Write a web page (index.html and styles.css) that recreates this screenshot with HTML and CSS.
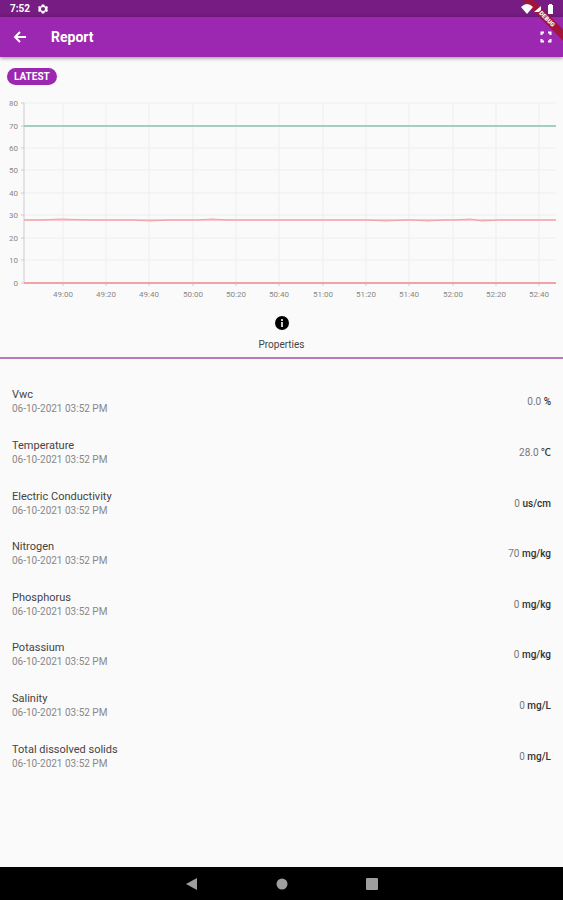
FILE: index.html
```
<!DOCTYPE html>
<html lang="en">
<head>
<meta charset="utf-8">
<meta name="viewport" content="width=device-width, initial-scale=1">
<title>Report</title>
<link rel="stylesheet" href="styles.css">
</head>
<body>
<div class="status-bar">
  <span class="clock">7:52</span>
  <svg class="gear" viewBox="0 0 24 24" aria-hidden="true"><path fill="#fff" fill-rule="evenodd" d="M9 1h6l1 4 2 1 4-1 2 5-3 2 3 2-2 5-4-1-2 1-1 4H9l-1-4-2-1-4 1-2-5 3-2-3-2 2-5 4 1 2-1zM12 7a5 5 0 1 0 0 10 5 5 0 0 0 0-10z"/></svg>
  <svg class="signals" viewBox="0 0 34 12" aria-hidden="true"><path fill="#fff" d="M0 4Q6-2 12 4L6 11zM20 3v4l-2 2h-5zM27 2h1V1h3v1h1v9h-5z"/></svg>
</div>
<header class="app-bar">
  <button class="icon-button" aria-label="Back"><svg width="14" height="14" viewBox="0 0 14 14"><path d="M13 7H2M7 2L2 7l5 5" fill="none" stroke="#fff" stroke-width="2"/></svg></button>
  <h1>Report</h1>
  <button class="icon-button" aria-label="Full screen"><svg width="12" height="12" viewBox="0 0 12 12"><path d="M1.5 4V1.500h2.500M8 1.500h2.500v2.500M10.500 8v2.500H8M4 10.500H1.500V8" fill="none" stroke="#fff" stroke-width="2"/></svg></button>
</header>
<div class="corner"><span class="ribbon">DEBUG</span></div>
<main>
  <button class="chip">LATEST</button>
  <svg class="chart" viewBox="0 0 563 216" role="img" aria-label="Sensor readings over time">
    <path class="grid" d="M24 13H556M24 58H556M24 80H556M24 103H556M24 125H556M24 148H556M24 170H556M63 13V193M106 13V193M149 13V193M193 13V193M236 13V193M279 13V193M323 13V193M366 13V193M409 13V193M453 13V193M496 13V193M539 13V193"/>
    <path class="axis" d="M24 13V193M21 13H24M21 36H24M21 58H24M21 80H24M21 103H24M21 125H24M21 148H24M21 170H24M21 193H24M63 193V196M106 193V196M149 193V196M193 193V196M236 193V196M279 193V196M323 193V196M366 193V196M409 193V196M453 193V196M496 193V196M539 193V196"/>
    <path class="series green" d="M24 36H556"/>
    <path class="series red-soft" d="M24 130H556"/>
    <path class="series red-thin" d="M24 130H42L60 129L90 130H132L150 131L168 130H198L212 129L228 130H366L386 131L406 130H412L428 131L444 130H454L470 129L482 131L500 130H556"/>
    <path class="series red" d="M24 193H556"/>
    <g class="y-labels"><text x="18" y="16">80</text><text x="18" y="39">70</text><text x="18" y="61">60</text><text x="18" y="83">50</text><text x="18" y="106">40</text><text x="18" y="128">30</text><text x="18" y="151">20</text><text x="18" y="173">10</text><text x="18" y="196">0</text></g>
    <g class="x-labels"><text x="63" y="207">49:00</text><text x="106" y="207">49:20</text><text x="149" y="207">49:40</text><text x="193" y="207">50:00</text><text x="236" y="207">50:20</text><text x="279" y="207">50:40</text><text x="323" y="207">51:00</text><text x="366" y="207">51:20</text><text x="409" y="207">51:40</text><text x="453" y="207">52:00</text><text x="496" y="207">52:20</text><text x="539" y="207">52:40</text></g>
  </svg>
  <button class="tab">
    <svg width="14" height="14" viewBox="0 0 14 14" aria-hidden="true"><circle cx="7" cy="7" r="7" fill="#000"/><path d="M6 3h2v2H6zM6 6h2v5H6z" fill="#ccc"/></svg>
    <span>Properties</span>
  </button>
  <ul class="readings">
    <li><div><h2>Vwc</h2><time>06-10-2021 03:52 PM</time></div><p>0.0 <b>%</b></p></li>
    <li><div><h2>Temperature</h2><time>06-10-2021 03:52 PM</time></div><p>28.0 <b>℃</b></p></li>
    <li><div><h2>Electric Conductivity</h2><time>06-10-2021 03:52 PM</time></div><p>0 <b>us/cm</b></p></li>
    <li><div><h2>Nitrogen</h2><time>06-10-2021 03:52 PM</time></div><p>70 <b>mg/kg</b></p></li>
    <li><div><h2>Phosphorus</h2><time>06-10-2021 03:52 PM</time></div><p>0 <b>mg/kg</b></p></li>
    <li><div><h2>Potassium</h2><time>06-10-2021 03:52 PM</time></div><p>0 <b>mg/kg</b></p></li>
    <li><div><h2>Salinity</h2><time>06-10-2021 03:52 PM</time></div><p>0 <b>mg/L</b></p></li>
    <li><div><h2>Total dissolved solids</h2><time>06-10-2021 03:52 PM</time></div><p>0 <b>mg/L</b></p></li>
  </ul>
</main>
<nav class="nav-bar" aria-label="System">
  <button aria-label="Back"><svg width="12" height="12" viewBox="0 0 12 12"><path d="M0 6L11 0v12z"/></svg></button>
  <button aria-label="Home"><svg width="12" height="12" viewBox="0 0 12 12"><circle cx="6" cy="6" r="5.5"/></svg></button>
  <button aria-label="Recent apps"><svg width="12" height="12" viewBox="0 0 12 12"><rect width="12" height="12" rx="1"/></svg></button>
</nav>
</body>
</html>
```
FILE: styles.css
```
* { box-sizing: border-box; }
body {
  margin: 0;
  min-height: 100vh;
  display: flex;
  flex-direction: column;
  position: relative;
  background: #fafafa;
  color: #444;
  font-family: Roboto, "Noto Sans CJK SC", sans-serif;
}
h1, h2, p, ul { margin: 0; padding: 0; }
button {
  margin: 0;
  padding: 0;
  border: 0;
  background: none;
  color: inherit;
  font: inherit;
}
svg { display: block; }

.status-bar {
  height: 17px;
  display: flex;
  align-items: center;
  padding: 1px 0 0 10px;
  background: #771c82;
  color: #fff;
}
.clock { font-size: 10px; font-weight: 700; line-height: 12px; }
.gear { width: 10px; height: 10px; margin-left: 8px; }
.signals {
  position: relative;
  z-index: 2;
  width: 34px;
  height: 12px;
  margin-left: auto;
  margin-right: 8px;
}

.app-bar {
  height: 40px;
  display: flex;
  align-items: center;
  padding: 0 11px 0 13px;
  background: #9c27b0;
  color: #fff;
  box-shadow: 0 1px 4px rgba(0, 0, 0, 0.45);
}
.app-bar h1 {
  flex: 1;
  margin-left: 24px;
  font-size: 14px;
  font-weight: 700;
  line-height: 20px;
}

.corner {
  position: absolute;
  top: 0;
  right: 0;
  width: 40px;
  height: 42px;
  overflow: hidden;
}
.ribbon {
  position: absolute;
  top: 15px;
  left: -8px;
  width: 64px;
  height: 8px;
  background: #a2163a;
  color: #fff;
  font-size: 6px;
  font-weight: 900;
  line-height: 8px;
  text-align: center;
  transform: rotate(45deg);
}

main { flex: 1; display: flex; flex-direction: column; }
.chip {
  align-self: flex-start;
  height: 17px;
  margin: 11px 0 5px 7px;
  padding: 0 7px;
  border-radius: 9px;
  background: #9c27b0;
  color: #fff;
  font-size: 10px;
  font-weight: 700;
  line-height: 17px;
}
.chart { width: 100%; height: auto; }
.grid { fill: none; stroke: #eee; stroke-width: 1; }
.axis { fill: none; stroke: #ccc; stroke-width: 1; }
.series { fill: none; stroke-width: 2; }
.green { stroke: #a5cec3; }
.red-soft { stroke: #fac8ca; }
.red-thin { stroke: #f0a2a6; stroke-width: 1; }
.red { stroke: #efa4aa; }
.chart text { fill: #888; font-size: 8px; }
.y-labels { text-anchor: end; }
.x-labels { text-anchor: middle; }

.tab {
  display: flex;
  flex-direction: column;
  align-items: center;
  gap: 9px;
  padding: 10px 0 6px;
  border-bottom: 2px solid #b77abf;
  font-size: 10px;
  line-height: 12px;
}

.readings {
  flex: 1;
  display: flex;
  flex-direction: column;
  padding: 18px 12px 85px;
  list-style: none;
}
.readings li {
  flex: 1;
  display: flex;
  align-items: center;
  justify-content: space-between;
}
.readings h2 { font-size: 11px; font-weight: 400; line-height: 14px; }
.readings time {
  display: block;
  color: #888;
  font-size: 10px;
  line-height: 14px;
}
.readings p { color: #777; font-size: 10px; line-height: 14px; }
.readings b { color: #333; font-weight: 500; }

.nav-bar {
  height: 33px;
  display: flex;
  align-items: center;
  justify-content: center;
  gap: 78px;
  background: #000;
}
.nav-bar svg { fill: #9e9e9e; }
```
